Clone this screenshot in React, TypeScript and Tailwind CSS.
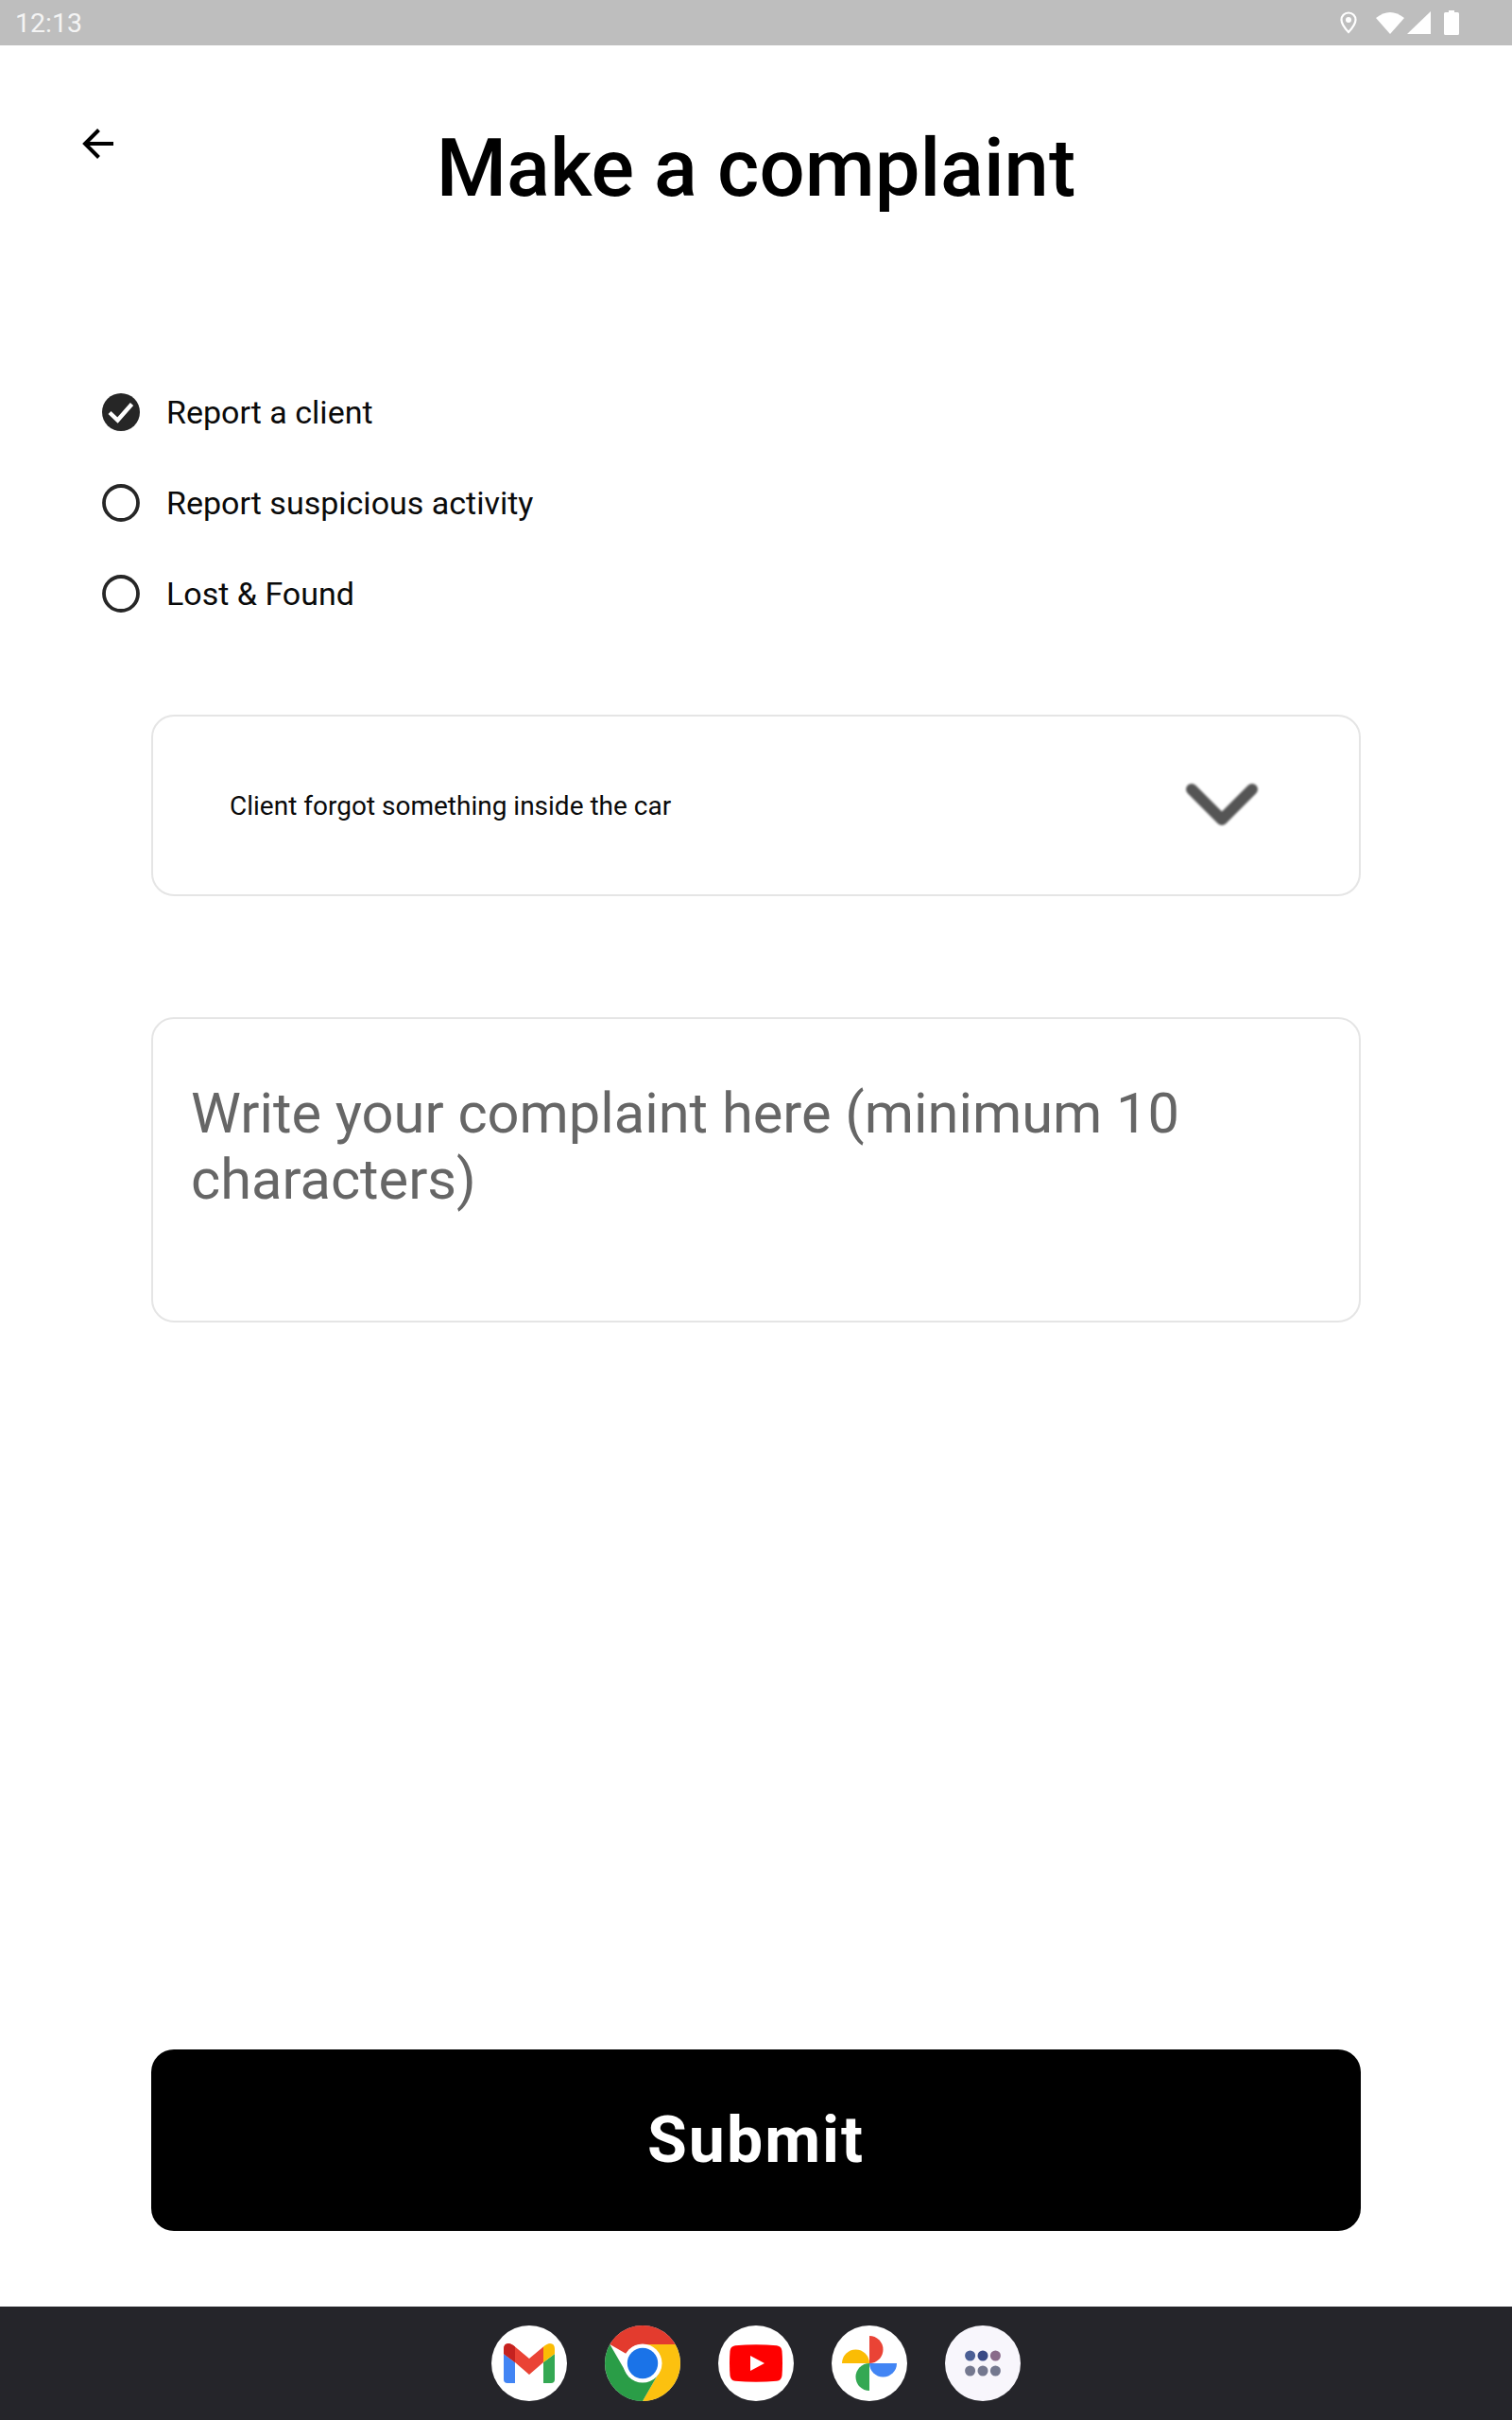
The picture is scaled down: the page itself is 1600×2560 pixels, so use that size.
import React from "react";

function Row({ label, checked }: { label: string; checked?: boolean }) {
  return (
    <div className="flex h-[96px] items-center gap-[28px]">
      <svg width="40" height="40" viewBox="0 0 40 40" className="shrink-0">
        {checked ? (
          <>
            <circle cx="20" cy="20" r="20" fill="#262626" />
            <path d="M8 20.5 L16.5 28.5 L31.5 11.5" fill="none" stroke="#fff" strokeWidth="4.4" />
          </>
        ) : (
          <circle cx="20" cy="20" r="18" fill="none" stroke="#262626" strokeWidth="3.8" />
        )}
      </svg>
      <span className="text-[34px] leading-none text-[#0a0a0a]">{label}</span>
    </div>
  );
}

function Gmail() {
  return (
    <svg width="54" height="42" viewBox="0 0 54 42">
      <path d="M0 11 L12 20 V42 H4 Q0 42 0 38Z" fill="#4285f4" />
      <path d="M54 11 L42 20 V42 H50 Q54 42 54 38Z" fill="#34a853" />
      <path d="M0 6 Q0 0 5 0 Q8 0 12 3.5 L27 16 L42 3.5 L42 20 L27 33 L12 20 L0 11Z" fill="#ea4335" />
      <path d="M0 6 Q0 0 5 0 Q8 0 12 3.5 V20 L0 11Z" fill="#c5221f" />
      <path d="M42 3.5 Q46 0 49 0 Q54 0 54 6 V11 L42 20Z" fill="#fbbc04" />
    </svg>
  );
}

function Chrome() {
  return (
    <svg width="80" height="80" viewBox="0 0 80 80">
      <circle cx="40" cy="40" r="40" fill="#fff" />
      <path d="M40 0 A40 40 0 0 1 74.6 20 H40 A20 20 0 0 0 22.7 30 L5.4 20 A40 40 0 0 1 40 0Z" fill="#e33b2e" />
      <path d="M74.6 20 A40 40 0 0 1 40 80 L57.3 50 A20 20 0 0 0 57.3 30 L40 20Z" fill="#fcc10f" />
      <path d="M5.4 20 L22.7 50 A20 20 0 0 0 57.3 50 L40 80 A40 40 0 0 1 5.4 20Z" fill="#2a9d47" />
      <circle cx="40" cy="40" r="20.5" fill="#fff" />
      <circle cx="40" cy="40" r="16.2" fill="#1a73e8" />
    </svg>
  );
}

function YouTube() {
  return (
    <svg width="56" height="40" viewBox="0 0 56 40">
      <path d="M6 1.2 Q28 -0.6 50 1.2 Q55 2 55.5 7 Q56.5 20 55.5 33 Q55 38 50 38.8 Q28 40.6 6 38.8 Q1 38 .5 33 Q-.5 20 .5 7 Q1 2 6 1.2Z" fill="#ff0000" />
      <path d="M22 12 L37 20 L22 28Z" fill="#fff" />
    </svg>
  );
}

function Photos() {
  return (
    <svg width="60" height="60" viewBox="-30 -30 60 60">
      <path d="M0 -29 A14.5 14.5 0 0 1 0 0Z" fill="#ea4335" />
      <path d="M-29 0 A14.5 14.5 0 0 1 0 0Z" fill="#fbbc04" />
      <path d="M29 0 A14.5 14.5 0 0 1 0 0Z" fill="#4285f4" />
      <path d="M0 29 A14.5 14.5 0 0 1 0 0Z" fill="#34a853" />
    </svg>
  );
}

function Apps() {
  return (
    <svg width="40" height="28" viewBox="0 0 40 28">
      <circle cx="6.6" cy="6" r="5.5" fill="#4b5f95" />
      <circle cx="20" cy="6" r="5.5" fill="#3a4a85" />
      <circle cx="33.4" cy="6" r="5.5" fill="#8a6b8a" />
      <circle cx="6.6" cy="22" r="5.5" fill="#74788f" />
      <circle cx="20" cy="22" r="5.5" fill="#74788f" />
      <circle cx="33.4" cy="22" r="5.5" fill="#74788f" />
    </svg>
  );
}

export default function App() {
  return (
    <div className="flex h-[2560px] w-[1600px] flex-col bg-white font-['Roboto',sans-serif]">
      <div className="flex h-[48px] shrink-0 items-center justify-between bg-[#bebebe] pl-[16px] pr-[56px] text-[28.5px] text-[#f4f4f4]">
        <span className="pt-[2px]">12:13</span>
        <div className="flex items-center">
          <svg width="18" height="24" viewBox="0 0 18 24" className="mr-[20px]">
            <path d="M9 1.5 C4.5 1.5 1.5 5 1.5 9 C1.5 14 9 22 9 22 C9 22 16.5 14 16.5 9 C16.5 5 13.5 1.5 9 1.5Z" fill="none" stroke="#fff" strokeWidth="2.2" />
            <circle cx="9" cy="9" r="3" fill="#fff" />
          </svg>
          <svg width="30" height="24" viewBox="0 0 30 24" className="mr-[3px]">
            <path d="M0 7 Q15 -5 30 7 L15 24Z" fill="#fff" />
          </svg>
          <svg width="25" height="24" viewBox="0 0 25 24" className="mr-[14px]">
            <path d="M25 0 V24 H0Z" fill="#fff" />
          </svg>
          <svg width="16" height="26" viewBox="0 0 16 26">
            <path d="M5 0 H11 V2 H14.5 Q16 2 16 3.5 V24.5 Q16 26 14.5 26 H1.5 Q0 26 0 24.5 V3.5 Q0 2 1.5 2 H5Z" fill="#fff" />
          </svg>
        </div>
      </div>

      <div className="grid shrink-0 grid-cols-[1fr_auto_1fr] pt-[81px]">
        <div className="pl-[87px] pt-[7px]">
          <svg width="33" height="32" viewBox="0 0 33 32" className="block">
            <path d="M33 16 H3 M17.5 1.5 L3 16 L17.5 30.5" fill="none" stroke="#000" strokeWidth="4" />
          </svg>
        </div>
        <h1 className="text-[85px] font-medium leading-[98px] text-black">Make a complaint</h1>
      </div>

      <div className="flex shrink-0 flex-col pl-[108px] pt-[161px]">
        <Row label="Report a client" checked />
        <Row label="Report suspicious activity" />
        <Row label="Lost & Found" />
      </div>

      <div className="flex shrink-0 flex-col gap-[128px] px-[160px] pt-[80px]">
        <div className="flex h-[192px] items-center justify-between rounded-[24px] border-[2.5px] border-[#e5e5e5] pl-[81px] pr-[106px]">
          <span className="pt-[1px] text-[28px] text-[#0a0a0a]">Client forgot something inside the car</span>
          <svg width="78" height="46" viewBox="0 0 78 46" className="blur-[0.8px]">
            <path d="M7 6 L39 38 L71 6" fill="none" stroke="#555" strokeWidth="12" strokeLinecap="round" strokeLinejoin="round" />
          </svg>
        </div>
        <div className="h-[323px] rounded-[24px] border-[2.5px] border-[#e5e5e5] pl-[40px] pr-[160px] pt-[65px] text-[59.6px] leading-[70px] text-[#666666]">
          Write your complaint here (minimum 10 characters)
        </div>
      </div>

      <div className="flex flex-1 flex-col justify-end px-[160px] pb-[80px]">
        <div className="flex h-[192px] items-center justify-center rounded-[24px] bg-black text-[68px] font-bold tracking-[2px] text-white">
          Submit
        </div>
      </div>

      <div className="flex h-[120px] shrink-0 items-center justify-center gap-[40px] bg-[#25252a]">
        <div className="flex h-[80px] w-[80px] items-center justify-center rounded-full bg-white">
          <Gmail />
        </div>
        <div className="flex h-[80px] w-[80px] items-center justify-center rounded-full">
          <Chrome />
        </div>
        <div className="flex h-[80px] w-[80px] items-center justify-center rounded-full bg-white">
          <YouTube />
        </div>
        <div className="flex h-[80px] w-[80px] items-center justify-center rounded-full bg-white">
          <Photos />
        </div>
        <div className="flex h-[80px] w-[80px] items-center justify-center rounded-full bg-[#f8f6fc]">
          <Apps />
        </div>
      </div>
    </div>
  );
}
